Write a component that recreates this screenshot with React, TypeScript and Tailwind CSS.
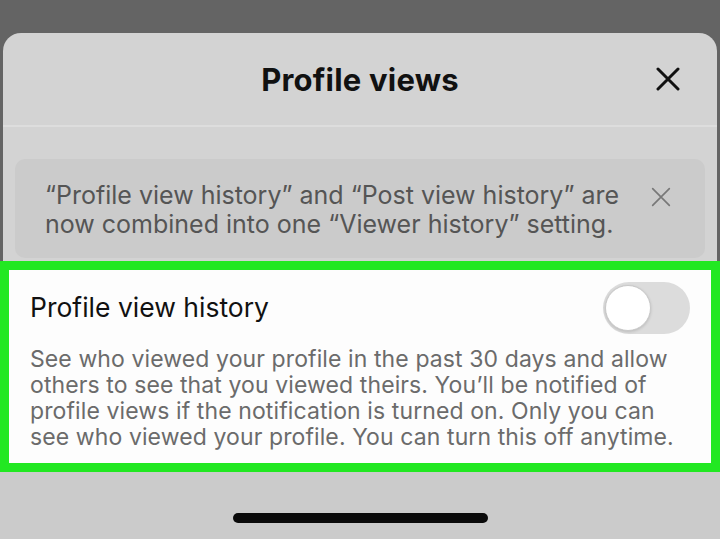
import React from "react";

function XIcon({ size, stroke, color }: { size: number; stroke: number; color: string }) {
  return (
    <svg width={size} height={size} viewBox="0 0 24 24" fill="none">
      <path d="M2 2L22 22M22 2L2 22" stroke={color} strokeWidth={stroke} strokeLinecap="round" />
    </svg>
  );
}

export default function App() {
  return (
    <div className="w-[720px] h-[539px] bg-[#646464] overflow-hidden flex flex-col pt-[33px] font-['Inter','Liberation_Sans',sans-serif]">
      <div className="mx-[3px] flex-1 rounded-t-[18px] bg-[#d3d3d3] flex flex-col">
        <div className="h-[94px] grid grid-cols-[1fr_auto_1fr] items-center border-b-2 border-[#dddddd]">
          <div />
          <div className="pt-[3px] text-[31px] font-bold text-[#111] tracking-[0.2px]">Profile views</div>
          <div className="flex justify-end pr-[37px]">
            <XIcon size={24} stroke={3} color="#111" />
          </div>
        </div>
        <div className="mt-[32px] mx-[12px] h-[99px] rounded-[10px] bg-[#cbcbcb] flex items-start pl-[30px] pr-[34px] pt-[22px]">
          <div className="flex-1 text-[25px] leading-[29px] text-[#555555]">
            <span className="block whitespace-nowrap">“Profile view history” and “Post view history” are</span>
            <span className="block whitespace-nowrap">now combined into one “Viewer history” setting.</span>
          </div>
          <div className="pt-[6px]">
            <XIcon size={20} stroke={2} color="#787878" />
          </div>
        </div>
        <div className="-mx-[3px] mt-[3px] h-[211px] border-[9px] border-[#22e822] bg-[#fdfdfd] flex flex-col px-[21px] pt-[12px]">
          <div className="flex items-center justify-between h-[52px]">
            <div className="text-[26.5px] text-[#111]">Profile view history</div>
            <div className="w-[87px] h-[52px] rounded-full bg-[#dcdcdc] p-[2px] flex items-center">
              <div className="w-[46px] h-[46px] rounded-full bg-white border border-[#c8c8c8] shadow-[0_1px_3px_rgba(0,0,0,0.15)]" />
            </div>
          </div>
          <div className="mt-[12px] text-[23px] leading-[26px] tracking-[0.1px] text-[#6b6b6b]">
            <span className="block whitespace-nowrap">See who viewed your profile in the past 30 days and allow</span>
            <span className="block whitespace-nowrap">others to see that you viewed theirs. You’ll be notified of</span>
            <span className="block whitespace-nowrap">profile views if the notification is turned on. Only you can</span>
            <span className="block whitespace-nowrap">see who viewed your profile. You can turn this off anytime.</span>
          </div>
        </div>
        <div className="flex-1 -mx-[3px] bg-[#cbcbcb] flex justify-center pt-[41px]">
          <div className="w-[255px] h-[10px] rounded-full bg-[#0a0a0a]" />
        </div>
      </div>
    </div>
  );
}
